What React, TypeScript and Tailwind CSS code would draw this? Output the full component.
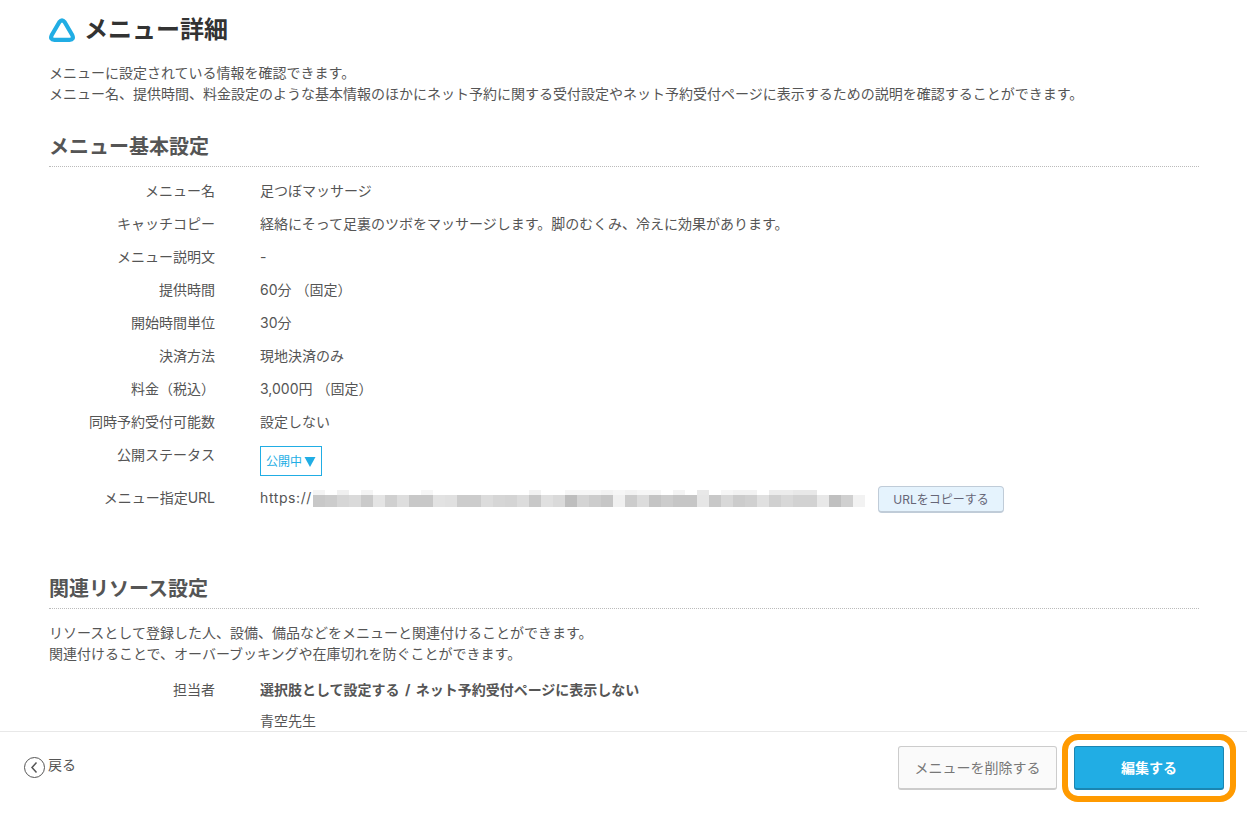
const basicRows: { label: string; value: string }[] = [
  { label: 'メニュー名', value: '足つぼマッサージ' },
  { label: 'キャッチコピー', value: '経絡にそって足裏のツボをマッサージします。脚のむくみ、冷えに効果があります。' },
  { label: 'メニュー説明文', value: '-' },
  { label: '提供時間', value: '60分 （固定）' },
  { label: '開始時間単位', value: '30分' },
  { label: '決済方法', value: '現地決済のみ' },
  { label: '料金（税込）', value: '3,000円 （固定）' },
  { label: '同時予約受付可能数', value: '設定しない' },
];

// blurred part of the url, one colour per 12px cell
const mosaicTop = [
  '#f4f4f4', '#fff', '#f0f0f0', '#fff', '#f4f4f4', '#fff', '#fff', '#fff', '#fff', '#f6f6f6', '#fff', '#fff', '#fff', '#fff', '#fff', '#fff', '#fff', '#fff', '#f2f2f2', '#fff', '#fff', '#f6f6f6', '#f6f6f6', '#f6f6f6',
  '#f2f2f2', '#f6f6f6', '#f2f2f2', '#f6f6f6', '#f6f6f6', '#fff', '#f4f4f4', '#fff', '#e8e8e8', '#fff', '#f6f6f6', '#f2f2f2', '#f2f2f2', '#fff', '#ececec', '#ececec', '#e8e8e8', '#e8e8e8', '#fff', '#fff', '#fff', '#fff',
];
const mosaicBottom = [
  '#c8c8c8', '#cccccc', '#d6d6d6', '#dadada', '#cacaca', '#e4e4e4', '#d0d0d0', '#dedede', '#c8c8c8', '#c8c8c8', '#e2e2e2', '#e0e0e0', '#cccccc', '#cccccc', '#dcdcdc', '#d6d6d6', '#d4d4d4', '#dcdcdc', '#c8c8c8', '#e0e0e0', '#dadada', '#bebebe', '#d4d4d4', '#cccccc',
  '#c6c6c6', '#f0f0f0', '#cccccc', '#dcdcdc', '#c4c4c4', '#cccccc', '#c6c6c6', '#c6c6c6', '#e6e6e6', '#c8c8c8', '#d8d8d8', '#cccccc', '#d0d0d0', '#e0e0e0', '#d0d0d0', '#d8d8d8', '#d2d2d2', '#d2d2d2', '#e8e8e8', '#c0c0c0', '#d0d0d0', '#f2f2f2',
];

const Row = ({ label, children }: { label: string; children: React.ReactNode }) => (
  <div className="flex">
    <div className="w-[166px] shrink-0 text-right text-[#555]">{label}</div>
    <div className="ml-[45px] min-w-0 flex-1 text-[#555]">{children}</div>
  </div>
);

const SectionTitle = ({ children }: { children: React.ReactNode }) => (
  <h2 className="border-b border-dotted border-[#bbb] pb-[4px] text-[20px] leading-[30px] font-bold text-[#555]">{children}</h2>
);

export default function App() {
  return (
    <div className="flex h-[817px] w-[1247px] flex-col overflow-hidden bg-white text-[14px] leading-[21px] text-[#555] [font-family:Inter,'Noto_Sans_CJK_JP',sans-serif]">
      <main className="min-h-0 flex-1 overflow-hidden pr-[48px] pl-[49px]">
        {/* page title */}
        <div className="flex h-[60px] items-center gap-[9px]">
          <svg width="26" height="24" viewBox="0 0 26 24" fill="none">
            <path
              d="M10.4 4 Q13 0.6 15.6 4 L23.2 17 Q25.4 21.8 20.6 21.8 H5.4 Q0.6 21.8 2.8 17 Z"
              stroke="#21ade4"
              strokeWidth="4.2"
              strokeLinejoin="round"
            />
          </svg>
          <h1 className="text-[24px] leading-[30px] font-bold text-[#333]">メニュー詳細</h1>
        </div>
        <p className="mt-[2px]">
          メニューに設定されている情報を確認できます。
          <br />
          メニュー名、提供時間、料金設定のような基本情報のほかにネット予約に関する受付設定やネット予約受付ページに表示するための説明を確認することができます。
        </p>

        <section className="mt-[28px]">
          <SectionTitle>メニュー基本設定</SectionTitle>
          <div className="mt-[13px] flex flex-col gap-[12px]">
            {basicRows.map((r) => (
              <Row key={r.label} label={r.label}>
                {r.value}
              </Row>
            ))}
            <Row label="公開ステータス">
              <div className="mt-[2px] -mb-[1px] flex h-[30px] w-[62px] items-center justify-center gap-[2px] border border-[#21ade4] pt-[1px] text-[12px] text-[#21ade4]">
                公開中
                <svg width="12" height="10" viewBox="0 0 12 10">
                  <path d="M0.5 0 H11.5 L6 10 Z" fill="#21ade4" />
                </svg>
              </div>
            </Row>
            <Row label="メニュー指定URL">
              <div className="flex h-[21px] items-start">
                <span className="w-[53px] shrink-0 tracking-[0.6px]">https://</span>
                <div className="mt-[3px] flex flex-col">
                  <div className="flex">
                    {mosaicTop.map((c, i) => (
                      <div key={i} className="h-[5px] w-[12px]" style={{ backgroundColor: c }} />
                    ))}
                  </div>
                  <div className="flex">
                    {mosaicBottom.map((c, i) => (
                      <div key={i} className="h-[12px] w-[12px]" style={{ backgroundColor: c }} />
                    ))}
                  </div>
                </div>
                <button className="-mt-[1px] ml-[13px] h-[27px] w-[126px] shrink-0 rounded-[4px] border border-b-2 border-[#c0ccd8] bg-[#e5f3fd] text-[12px] text-[#667]">
                  URLをコピーする
                </button>
              </div>
            </Row>
          </div>
        </section>

        <section className="mt-[66px]">
          <SectionTitle>関連リソース設定</SectionTitle>
          <p className="mt-[13px]">
            リソースとして登録した人、設備、備品などをメニューと関連付けることができます。
            <br />
            関連付けることで、オーバーブッキングや在庫切れを防ぐことができます。
          </p>
          <div className="mt-[15px] flex flex-col gap-[10px]">
            <Row label="担当者">
              <span className="font-bold [word-spacing:2px]">選択肢として設定する / ネット予約受付ページに表示しない</span>
            </Row>
            <Row label="">青空先生</Row>
          </div>
        </section>
      </main>

      {/* footer bar */}
      <footer className="flex h-[86px] shrink-0 items-start justify-between border-t border-[#e8e8e8] pt-[2px] pr-[11px] pl-[24px]">
        <a className="mt-[20px] flex items-center gap-[3px] text-[#555]">
          <svg width="21" height="21" viewBox="0 0 21 21" fill="none" stroke="#555" className="mt-[3px]">
            <circle cx="10.5" cy="10.5" r="10" />
            <path d="M12.5 5.5 L8 10.5 L12.5 15.5" strokeWidth="1.5" />
          </svg>
          <span className="-mt-[3px]">戻る</span>
        </a>
        <div className="flex items-center">
          <button className="h-[44px] w-[159px] rounded-[3px] border border-b-2 border-[#ccc] bg-[#fafafa] text-[#777]">
            メニューを削除する
          </button>
          <div className="ml-[5px] rounded-[16px] border-[6px] border-[#ff9a00] p-[6px]">
            <button className="block h-[44px] w-[150px] rounded-[3px] border border-b-2 border-[#1a85b2] bg-[#21ade4] font-bold text-white">
              編集する
            </button>
          </div>
        </div>
      </footer>
    </div>
  );
}
